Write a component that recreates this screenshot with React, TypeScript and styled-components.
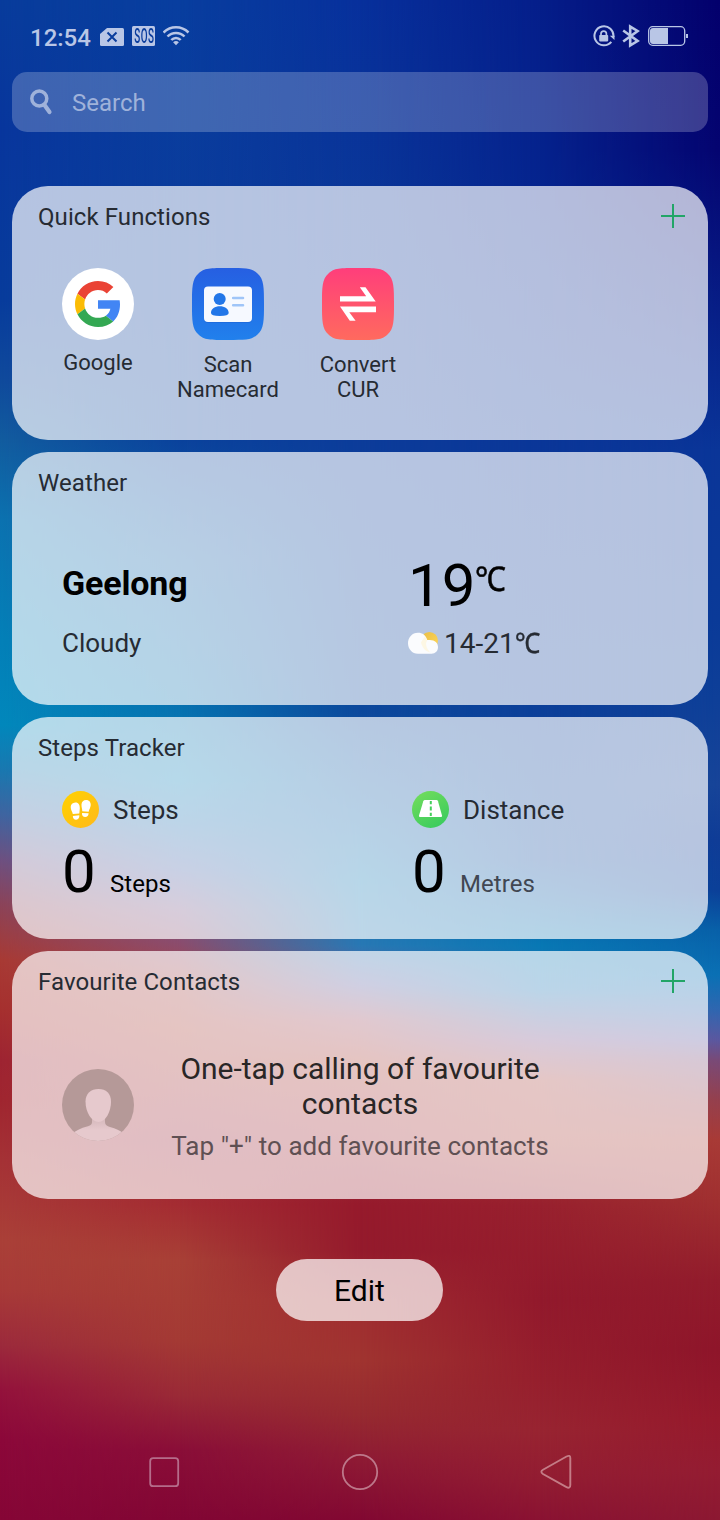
import React from 'react';
import styled, { createGlobalStyle } from 'styled-components';

const GlobalStyle = createGlobalStyle`
  * { box-sizing: border-box; }
  html, body { margin: 0; padding: 0; background: #083a9a; }
  body { font-family: Roboto, "Noto Sans", "Liberation Sans", sans-serif; color: #000; }
  svg { display: block; flex: none; }
`;

/* ---------- wallpaper: vertical colour ramps blended into each other ---------- */

const ramps: [number, string][][] = [
  [
    [0, '#083c9c'], [130, '#08369d'], [300, '#083c9c'], [380, '#104a9c'], [440, '#125c9f'], [520, '#0c72b0'],
    [640, '#0480b8'], [725, '#0288bc'], [770, '#1a78b0'], [815, '#4064a0'], [860, '#6e5080'], [905, '#8c4358'],
    [960, '#a83a34'], [1010, '#a6302f'], [1060, '#9e2432'], [1100, '#a02630'], [1160, '#a53236'], [1240, '#aa4038'],
    [1290, '#a83a38'], [1345, '#9c2a3c'], [1390, '#94123c'], [1440, '#8c083a'], [1520, '#860636'],
  ],
  [
    [0, '#083e9f'], [200, '#0a3c9c'], [440, '#0a429c'], [560, '#1060a8'], [710, '#0672b0'], [780, '#0c80b8'],
    [820, '#2074b4'], [870, '#4a64a8'], [910, '#7a5888'], [945, '#8c4c6c'], [985, '#a44444'], [1030, '#a83c34'],
    [1140, '#9a2438'], [1205, '#a42c32'], [1260, '#a84036'], [1340, '#a43a34'], [1395, '#9a2a36'], [1450, '#8a0e38'],
    [1520, '#820634'],
  ],
  [
    [0, '#07309c'], [200, '#0a3698'], [440, '#0c3c9a'], [710, '#0c489c'], [800, '#1060a8'], [880, '#1078b4'],
    [945, '#2878b4'], [985, '#6060a0'], [1020, '#9a4a60'], [1060, '#a83c34'], [1140, '#a02c38'], [1205, '#961a2c'],
    [1250, '#941a2c'], [1300, '#a02c30'], [1360, '#a03430'], [1415, '#962a30'], [1460, '#8e1a34'], [1520, '#820832'],
  ],
  [
    [0, '#051e8a'], [200, '#05248e'], [440, '#0a3698'], [710, '#0c3f99'], [860, '#0e4a9e'], [945, '#0878b4'],
    [990, '#1c74b4'], [1040, '#7a5088'], [1080, '#a84440'], [1140, '#a83c36'], [1205, '#98202e'], [1300, '#92192c'],
    [1380, '#961f2d'], [1430, '#982431'], [1480, '#921c32'], [1520, '#8a1232'],
  ],
  [
    [0, '#03006c'], [150, '#040470'], [250, '#06147e'], [380, '#082a90'], [450, '#0a3598'], [620, '#0a3a98'],
    [700, '#0e3f98'], [785, '#174498'], [840, '#0f3c96'], [890, '#0b3f98'], [930, '#0860a8'], [975, '#0a70b4'],
    [1010, '#2f66b0'], [1040, '#5a58a0'], [1060, '#784a78'], [1100, '#94404e'], [1140, '#a83a36'], [1200, '#a03030'],
    [1280, '#921c2c'], [1350, '#8e152a'], [1420, '#96192c'], [1470, '#941c32'], [1520, '#8c1832'],
  ],
];

const Screen = styled.main`
  position: relative;
  isolation: isolate;
  width: 720px;
  height: 1520px;
  overflow: hidden;
  display: flex;
  flex-direction: column;
`;

const Wallpaper = styled.div`
  position: absolute;
  inset: 0;
  z-index: -1;
`;

const Ramp = styled.div<{ $i: number }>`
  position: absolute;
  inset: 0;
  background: linear-gradient(to bottom, ${p => ramps[p.$i].map(([y, c]) => `${c} ${y}px`).join(', ')});
  ${p => p.$i > 0 && `mask-image: linear-gradient(to right, transparent ${(p.$i - 1) * 180}px, #000 ${p.$i * 180}px);`}
`;

/* ---------- status bar ---------- */

const StatusBar = styled.header`
  height: 72px;
  padding: 0 32px 0 30px;
  display: flex;
  justify-content: space-between;
  align-items: center;
  color: #b9c6e6;
`;

const StatusGroup = styled.div<{ $gap: number }>`
  display: flex;
  align-items: center;
  gap: ${p => p.$gap}px;
`;

const Clock = styled.span`
  font-size: 24px;
  line-height: 30px;
  padding-top: 4px;
  font-weight: 500;
  width: 62px;
`;

/* ---------- search ---------- */

const SearchBar = styled.div`
  height: 60px;
  margin: 0 12px 54px;
  padding-left: 17px;
  border-radius: 15px;
  background: rgba(255, 255, 255, 0.22);
  display: flex;
  align-items: center;
  gap: 17px;
  font-size: 24px;
  color: #9fb2da;
`;

const SearchHint = styled.span`
  padding-top: 2px;
`;

/* ---------- cards ---------- */

const Cards = styled.div`
  margin: 0 12px;
  display: flex;
  flex-direction: column;
  gap: 12px;
`;

const Card = styled.section<{ $h: number }>`
  height: ${p => p.$h}px;
  border-radius: 36px;
  background: rgba(255, 255, 255, 0.7);
  padding: 15px 22px 0 26px;
`;

const CardHeader = styled.div`
  height: 30px;
  display: flex;
  align-items: center;
  justify-content: space-between;
`;

const CardTitle = styled.h2`
  margin: 0;
  padding-top: 2px;
  font-size: 24px;
  line-height: 30px;
  font-weight: 400;
  letter-spacing: 0.08px;
  color: #262b33;
`;

const Shortcuts = styled.div`
  display: flex;
  margin: 37px 0 0 -5px;
`;

const Shortcut = styled.div`
  width: 130px;
  display: flex;
  flex-direction: column;
  align-items: center;
  text-align: center;
`;

const ShortcutLabel = styled.span<{ $top: number }>`
  margin-top: ${p => p.$top}px;
  font-size: 22px;
  line-height: 25px;
  white-space: pre-line;
  color: #262b33;
`;

const TwoColumns = styled.div<{ $top: number }>`
  display: grid;
  grid-template-columns: 350px 1fr;
  margin: ${p => p.$top}px 0 0 24px;
`;

const City = styled.div`
  font-size: 34px;
  font-weight: 700;
  line-height: 40px;
  letter-spacing: -0.15px;
  margin-top: 14px;
`;

const Condition = styled.div`
  font-size: 26px;
  line-height: 32px;
  margin-top: 24px;
  color: #262b33;
`;

const Temperature = styled.div`
  display: flex;
  align-items: flex-start;
  height: 76px;
  font-size: 60px;
  line-height: 74px;
  margin-left: -4px;
`;

const Degree = styled.span`
  font-size: 34px;
  line-height: 60px;
  -webkit-text-stroke: 0.5px currentColor;
  transform: scaleX(0.91);
  transform-origin: left;
`;

const Range = styled.div`
  display: flex;
  align-items: center;
  margin: 2px 0 0 -4px;
  font-size: 28px;
  line-height: 32px;
  color: #262b33;
`;

const RangeValue = styled.span`
  margin-left: 5px;
  padding-top: 1px;
`;

const RangeUnit = styled.span`
  display: inline-block;
  -webkit-text-stroke: 0.4px currentColor;
  transform: scaleX(0.91);
  transform-origin: left;
`;

const Metric = styled.div`
  display: flex;
  align-items: center;
  gap: 14px;
  height: 37px;
  font-size: 26px;
  color: #262b33;
`;

const MetricName = styled.span`
  padding-top: 1px;
`;

const Reading = styled.div`
  display: flex;
  align-items: baseline;
  gap: 16px;
  margin-top: 9px;
  line-height: 70px;
`;

const ReadingValue = styled.span`
  font-size: 60px;
  width: 32px;
`;

const ReadingUnit = styled.span<{ $muted?: boolean }>`
  font-size: 24px;
  letter-spacing: 0.05px;
  color: ${p => (p.$muted ? '#414752' : '#000')};
`;

const Contacts = styled.div`
  display: flex;
  margin: 55px 0 0 24px;
`;

const AvatarWrap = styled.div`
  padding-top: 18px;
`;

const ContactsText = styled.div`
  width: 452px;
  text-align: center;
`;

const ContactsTitle = styled.div`
  font-size: 30px;
  line-height: 35px;
  color: #292626;
  padding: 0 40px;
`;

const ContactsHint = styled.div`
  font-size: 26px;
  line-height: 32px;
  letter-spacing: 0.05px;
  margin-top: 9px;
  color: #5f5053;
`;

const EditButton = styled.button`
  width: 167px;
  height: 62px;
  margin: 60px 0 0 276px;
  border: 0;
  border-radius: 31px;
  background: rgba(255, 255, 255, 0.72);
  font-family: inherit;
  font-size: 30px;
  color: #000;
  padding: 0;
`;

const NavBar = styled.nav`
  margin-top: auto;
  height: 96px;
  padding: 0 145px;
  display: flex;
  align-items: center;
  justify-content: space-between;
`;

/* ---------- icons ---------- */

const AddIcon = () => (
  <svg width="26" height="26" viewBox="0 0 26 26" stroke="#22a567" strokeWidth="2">
    <path d="M1 13H25M13 1V25" />
  </svg>
);

const NoSimIcon = () => (
  <svg width="24" height="20" viewBox="0 -2 24 20">
    <path d="M7 0H22.5Q24 0 24 1.500V16.500Q24 18 22.500 18H1.500Q0 18 0 16.500V6Z" fill="currentColor" />
    <path d="M7.500 4.500L16.500 13.500M16.500 4.500L7.500 13.500" stroke="#0a3c9c" strokeWidth="2" />
  </svg>
);

const SosBadge = styled.span`
  width: 23px;
  height: 20px;
  border-radius: 1.5px;
  background: #b9c6e6;
  color: #0a3c9c;
  display: flex;
  align-items: center;
  justify-content: center;
`;

const SosText = styled.span`
  font-size: 21px;
  line-height: 20px;
  font-weight: 500;
  letter-spacing: 1px;
  margin-right: -1px;
  transform: scaleX(0.47);
`;

const WifiIcon = () => (
  <svg width="27" height="20" viewBox="1 0 27 20" fill="none" stroke="currentColor" strokeWidth="2.500">
    <path d="M1.500 6.500C8.500 -.4 19.500 -.4 26.500 6.500" />
    <path d="M5.500 10.500C10.200 5.700 17.800 5.700 22.500 10.500" />
    <path d="M9.300 14C11.900 11.200 16.100 11.200 18.700 14" />
    <path d="M11.100 16.200Q14 13.800 16.900 16.200L14 19.300Z" fill="currentColor" stroke="none" />
  </svg>
);

const RotationLockIcon = () => (
  <svg width="22" height="22" viewBox="0 0 22 22" fill="none" stroke="currentColor">
    <path d="M18.300 16.900A9.500 9.500 0 1 1 20.400 12" strokeWidth="2" />
    <path d="M16.800 10.700H21.500V15Z" fill="currentColor" stroke="none" />
    <rect x="6.200" y="10" width="9" height="6.400" rx=".8" fill="currentColor" stroke="none" />
    <path d="M8 10.500V8.800A2.700 2.700 0 0 1 13.400 8.800V10.500" strokeWidth="1.700" />
  </svg>
);

const BluetoothIcon = () => (
  <svg width="19" height="24" viewBox="0 0 19 24" fill="none" stroke="currentColor" strokeWidth="2.600">
    <path d="M1.200 6.500L15.600 17L8.200 21.400V2.600L15.600 7L1.200 17.500" />
  </svg>
);

const BatteryIcon = () => (
  <svg width="40" height="20" viewBox="0 0 40 20">
    <rect x=".7" y=".7" width="36" height="18.600" rx="4" fill="none" stroke="currentColor" strokeWidth="1.300" />
    <path d="M5 2H20V18H5Q2 18 2 15V5Q2 2 5 2Z" fill="currentColor" />
    <rect x="38" y="8" width="2" height="4" fill="currentColor" />
  </svg>
);

const SearchIcon = () => (
  <svg width="26" height="28" viewBox="0 0 26 28" fill="none" stroke="currentColor">
    <circle cx="10.300" cy="10.500" r="7.500" strokeWidth="3.500" />
    <path d="M15.500 17L20.500 24" strokeWidth="4.200" strokeLinecap="round" />
  </svg>
);

const GoogleIcon = () => (
  <svg width="72" height="72" viewBox="0 0 72 72">
    <circle cx="36" cy="36" r="36" fill="#fff" />
    <g transform="translate(13 13) scale(.958)">
      <path fill="#EA4335" d="M24 9.500c3.540 0 6.710 1.220 9.210 3.600l6.850-6.850C35.900 2.380 30.470 0 24 0 14.620 0 6.510 5.380 2.560 13.220l7.980 6.190C12.430 13.720 17.740 9.500 24 9.500z" />
      <path fill="#4285F4" d="M46.980 24.550c0-1.570-.15-3.090-.38-4.550H24v9.020h12.940c-.58 2.960-2.260 5.480-4.780 7.180l7.730 6c4.510-4.180 7.090-10.360 7.090-17.650z" />
      <path fill="#FBBC05" d="M10.530 28.590c-.48-1.450-.76-2.990-.76-4.590s.27-3.140.76-4.590l-7.980-6.190C.92 16.460 0 20.120 0 24c0 3.880.92 7.540 2.560 10.780l7.970-6.190z" />
      <path fill="#34A853" d="M24 48c6.480 0 11.930-2.130 15.890-5.810l-7.730-6c-2.150 1.450-4.920 2.300-8.160 2.300-6.260 0-11.570-4.220-13.470-9.910l-7.980 6.190C6.510 42.620 14.620 48 24 48z" />
    </g>
  </svg>
);

const TILE = 'M36 0C54 0 60 0 65.500 5.500C72 11 72 20 72 36S72 61 65.500 66.500C60 72 54 72 36 72S12 72 6.500 66.500C0 61 0 52 0 36S0 11 6.500 5.500C12 0 18 0 36 0Z';

const NamecardIcon = () => (
  <svg width="72" height="72" viewBox="0 0 72 72">
    <defs>
      <linearGradient id="namecard" x1="0" y1="0" x2="0" y2="1">
        <stop stopColor="#265fe2" /><stop offset="1" stopColor="#2180ec" />
      </linearGradient>
    </defs>
    <path d={TILE} fill="url(#namecard)" />
    <rect x="12" y="19.500" width="48" height="35.500" rx="4" fill="#1c5fd0" opacity=".5" />
    <rect x="12" y="18.500" width="48" height="35.500" rx="4" fill="#f6f9ff" />
    <circle cx="27.700" cy="31" r="6" fill="#2276e8" />
    <path d="M19 45C19 40.500 23 38.200 27.800 38.200S36.700 40.500 36.700 45Q36.700 48 27.800 48T19 45Z" fill="#2276e8" />
    <path d="M41.200 30H51M41.200 37.300H51" stroke="#9fc5f8" strokeWidth="2.600" strokeLinecap="round" />
  </svg>
);

const ConvertIcon = () => (
  <svg width="72" height="72" viewBox="0 0 72 72">
    <defs>
      <linearGradient id="convert" x1="0" y1="0" x2="0" y2="1">
        <stop stopColor="#ff3e7b" /><stop offset="1" stopColor="#ff6a5e" />
      </linearGradient>
    </defs>
    <path d={TILE} fill="url(#convert)" />
    <path d="M18 28.200H44.200L37.800 19.300H43.500L53.700 33.500H18Z M54 38.600H18L27.800 52.800H33.600L27.300 44.200H54Z" fill="#fff" />
  </svg>
);

const PartlyCloudyIcon = () => (
  <svg width="31" height="24" viewBox="0 .8 31 24">
    <defs>
      <linearGradient id="sun" x1="0" y1="0" x2="1" y2="1">
        <stop stopColor="#e8bd45" /><stop offset="1" stopColor="#ffd75a" />
      </linearGradient>
    </defs>
    <circle cx="21.300" cy="9.500" r="8.700" fill="url(#sun)" />
    <path d="M10 1.500C14.500 1.500 18 4 19.300 8.900C26 7.800 30 11 30 15.900C30 20 27.500 22.500 23.500 22.500H10C4 22.500 0 17.500 0 12S4 1.500 10 1.500Z" fill="#fbfcfe" />
    <path d="M13 11C14 16 17 20 22 21C18 17 17 12 19.300 9.400L17 5Z" fill="#fff4d2" opacity=".6" />
  </svg>
);

const StepsIcon = () => (
  <svg width="37" height="37" viewBox="0 0 37 37">
    <defs>
      <linearGradient id="steps" x1="0" y1="0" x2="1" y2="1">
        <stop stopColor="#ffd200" /><stop offset="1" stopColor="#ffb91c" />
      </linearGradient>
    </defs>
    <circle cx="18.500" cy="18.500" r="18.500" fill="url(#steps)" />
    <g fill="#fff">
      <path d="M13.300 11.600C16.500 11.400 17.900 14 17.800 17.500L17.300 22.500L10.800 23.100C10.300 20.500 8.700 19 8.700 16C8.700 13.500 10.700 11.800 13.300 11.600Z" />
      <path d="M10.800 24.900L17.300 24.300C17.500 26.700 16.500 28.500 14.200 28.700C12.200 28.800 11 27.500 10.800 24.900Z" />
      <path d="M24 8.900C27.300 8.800 29 11.300 28.700 14.300C28.500 17 27 18.500 26.700 20.700L20.300 20.300C20.300 18 19.300 16 19.500 13.300C19.700 10.500 21.500 9 24 8.900Z" />
      <path d="M20 22L26.600 22.200C26.500 24.700 25.200 26 23.200 26C21 25.900 19.800 24.500 20 22Z" />
    </g>
  </svg>
);

const RoadIcon = () => (
  <svg width="37" height="37" viewBox="0 0 37 37">
    <defs>
      <linearGradient id="road" x1=".2" y1="0" x2=".8" y2="1">
        <stop stopColor="#71dc5c" /><stop offset="1" stopColor="#38cb5e" />
      </linearGradient>
    </defs>
    <circle cx="18.500" cy="18.500" r="18.500" fill="url(#road)" />
    <path d="M13 9H24.500Q25.600 9 26 10.300L30 24.500Q30.300 26 29 26H8Q6.700 26 7 24.500L11.300 10.300Q11.700 9 13 9Z" fill="#fff" />
    <path d="M18.800 10V13.200M18.800 15.500V19.500M18.800 21.800V25" stroke="#45cf5c" strokeWidth="2" />
  </svg>
);

const AvatarIcon = () => (
  <svg width="72" height="72" viewBox="0 0 72 72">
    <defs>
      <clipPath id="avatar"><circle cx="36" cy="36" r="36" /></clipPath>
      <linearGradient id="neck" x1="0" y1="0" x2="0" y2="1">
        <stop stopColor="#d3b6b9" /><stop offset=".55" stopColor="#e6c9cd" />
      </linearGradient>
    </defs>
    <g clipPath="url(#avatar)">
      <rect width="72" height="72" fill="#b59998" />
      <path d="M30 48H43V53C43 56 45 57 48 58C54 59.500 58 61.500 61 64V72H11V64C14 61.500 19 59 25 57.500C28 56.500 30 56 30 53Z" fill="url(#neck)" />
      <path d="M36.500 20C44 20 49 24.500 49 32.500C49 43 43.500 53 36.500 53S23.500 43 23.500 32.500C23.500 24.500 29 20 36.500 20Z" fill="#e6c9cd" />
    </g>
  </svg>
);

const RecentsIcon = () => (
  <svg width="38" height="38" viewBox="0 0 38 38" fill="none" stroke="#b56c8a" strokeWidth="1.800">
    <rect x="5.200" y="5.200" width="28" height="28" rx="3" />
  </svg>
);

const HomeIcon = () => (
  <svg width="38" height="38" viewBox="0 0 38 38" fill="none" stroke="#bd788a" strokeWidth="1.800">
    <circle cx="19" cy="19" r="17.200" />
  </svg>
);

const BackIcon = () => (
  <svg width="38" height="38" viewBox="0 0 38 38" fill="none" stroke="#c47c86" strokeWidth="1.900">
    <path d="M29.500 3.500Q33.300 1.700 33.300 5V32Q33.300 36 29.500 34.200L6 21Q2.700 18.700 6 16.800Z" />
  </svg>
);

/* ---------- page ---------- */

export default function App() {
  return (
    <Screen>
      <GlobalStyle />
      <Wallpaper>{ramps.map((_, i) => <Ramp key={i} $i={i} />)}</Wallpaper>

      <StatusBar>
        <StatusGroup $gap={8}>
          <Clock>12:54</Clock>
          <NoSimIcon />
          <SosBadge><SosText>SOS</SosText></SosBadge>
          <WifiIcon />
        </StatusGroup>
        <StatusGroup $gap={7}>
          <RotationLockIcon />
          <BluetoothIcon />
          <BatteryIcon />
        </StatusGroup>
      </StatusBar>

      <SearchBar><SearchIcon /><SearchHint>Search</SearchHint></SearchBar>

      <Cards>
        <Card $h={254}>
          <CardHeader><CardTitle>Quick Functions</CardTitle><AddIcon /></CardHeader>
          <Shortcuts>
            <Shortcut><GoogleIcon /><ShortcutLabel $top={10}>Google</ShortcutLabel></Shortcut>
            <Shortcut><NamecardIcon /><ShortcutLabel $top={12}>{'Scan\nNamecard'}</ShortcutLabel></Shortcut>
            <Shortcut><ConvertIcon /><ShortcutLabel $top={12}>{'Convert\nCUR'}</ShortcutLabel></Shortcut>
          </Shortcuts>
        </Card>

        <Card $h={253}>
          <CardHeader><CardTitle>Weather</CardTitle></CardHeader>
          <TwoColumns $top={52}>
            <div>
              <City>Geelong</City>
              <Condition>Cloudy</Condition>
            </div>
            <div>
              <Temperature>19<Degree>℃</Degree></Temperature>
              <Range><PartlyCloudyIcon /><RangeValue>14-21<RangeUnit>℃</RangeUnit></RangeValue></Range>
            </div>
          </TwoColumns>
        </Card>

        <Card $h={222}>
          <CardHeader><CardTitle>Steps Tracker</CardTitle></CardHeader>
          <TwoColumns $top={29}>
            <div>
              <Metric><StepsIcon /><MetricName>Steps</MetricName></Metric>
              <Reading><ReadingValue>0</ReadingValue><ReadingUnit>Steps</ReadingUnit></Reading>
            </div>
            <div>
              <Metric><RoadIcon /><MetricName>Distance</MetricName></Metric>
              <Reading><ReadingValue>0</ReadingValue><ReadingUnit $muted>Metres</ReadingUnit></Reading>
            </div>
          </TwoColumns>
        </Card>

        <Card $h={248}>
          <CardHeader><CardTitle>Favourite Contacts</CardTitle><AddIcon /></CardHeader>
          <Contacts>
            <AvatarWrap><AvatarIcon /></AvatarWrap>
            <ContactsText>
              <ContactsTitle>One-tap calling of favourite contacts</ContactsTitle>
              <ContactsHint>Tap "+" to add favourite contacts</ContactsHint>
            </ContactsText>
          </Contacts>
        </Card>
      </Cards>

      <EditButton>Edit</EditButton>

      <NavBar><RecentsIcon /><HomeIcon /><BackIcon /></NavBar>
    </Screen>
  );
}
